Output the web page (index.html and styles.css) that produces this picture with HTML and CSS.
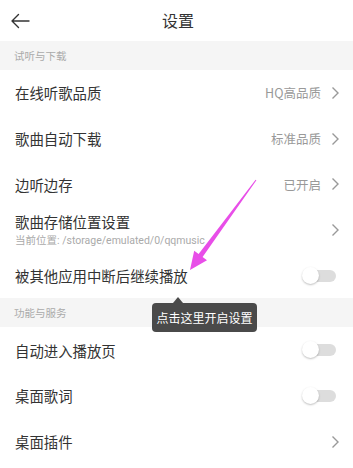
FILE: index.html
```html
<!DOCTYPE html>
<html lang="zh-CN">
<head>
<meta charset="utf-8">
<title>设置</title>
<link rel="stylesheet" href="styles.css">
</head>
<body>
<div class="page">
  <header class="topbar">
    <svg class="back" width="20" height="16" viewBox="0 0 20 16"><path d="M19 8H2M8.5 1.5L2 8l6.5 6.5" fill="none" stroke="#333" stroke-width="1.4" stroke-linecap="round" stroke-linejoin="round"/></svg>
    <h1 class="title">设置</h1>
  </header>

  <div class="section">试听与下载</div>
  <div class="row">
    <span class="label">在线听歌品质</span>
    <span class="value">HQ高品质</span>
    <svg class="chev" width="9" height="14" viewBox="0 0 9 14"><path d="M1.5 1.5L7 7l-5.5 5.5" fill="none" stroke="#999" stroke-width="1.4"/></svg>
  </div>
  <div class="row">
    <span class="label">歌曲自动下载</span>
    <span class="value">标准品质</span>
    <svg class="chev" width="9" height="14" viewBox="0 0 9 14"><path d="M1.5 1.5L7 7l-5.5 5.5" fill="none" stroke="#999" stroke-width="1.4"/></svg>
  </div>
  <div class="row">
    <span class="label">边听边存</span>
    <span class="value">已开启</span>
    <svg class="chev" width="9" height="14" viewBox="0 0 9 14"><path d="M1.5 1.5L7 7l-5.5 5.5" fill="none" stroke="#999" stroke-width="1.4"/></svg>
  </div>
  <div class="row">
    <div class="stack">
      <span class="label">歌曲存储位置设置</span>
      <span class="sub">当前位置: /storage/emulated/0/qqmusic</span>
    </div>
    <svg class="chev" width="9" height="14" viewBox="0 0 9 14"><path d="M1.5 1.5L7 7l-5.5 5.5" fill="none" stroke="#999" stroke-width="1.4"/></svg>
  </div>
  <div class="row">
    <span class="label">被其他应用中断后继续播放</span>
    <span class="toggle"><span class="knob"></span></span>
  </div>

  <div class="section">功能与服务</div>
  <div class="row">
    <span class="label">自动进入播放页</span>
    <span class="toggle"><span class="knob"></span></span>
  </div>
  <div class="row">
    <span class="label">桌面歌词</span>
    <span class="toggle"><span class="knob"></span></span>
  </div>
  <div class="row">
    <span class="label">桌面插件</span>
    <svg class="chev" width="9" height="14" viewBox="0 0 9 14"><path d="M1.5 1.5L7 7l-5.5 5.5" fill="none" stroke="#999" stroke-width="1.4"/></svg>
  </div>

  <div class="tooltip">点击这里开启设置</div>

  <svg class="pointer" width="353" height="468" viewBox="0 0 353 468">
    <polygon points="256.4,180.3 255.6,179.7 198.6,254 194.2,250.8 190,270 207,260.2 202.6,257" fill="#e84ee8"/>
  </svg>
</div>
</body>
</html>
```

FILE: styles.css
```css
* { box-sizing: border-box; margin: 0; padding: 0; }
html, body { background: #fff; }
body {
  font-family: "Noto Sans CJK SC", "Noto Sans", sans-serif;
  color: #333;
  width: 353px;
  height: 468px;
  overflow: hidden;
}
.page { position: relative; width: 353px; height: 468px; }
.topbar {
  height: 41px;
  display: flex;
  align-items: center;
  position: relative;
}
.back { position: absolute; left: 10px; top: 13px; }
.title {
  flex: 1;
  text-align: center;
  font-size: 16px;
  font-weight: normal;
  color: #333;
  padding-left: 3px;
  line-height: 41px;
}
.section {
  background: #f5f5f5;
  height: 29px;
  display: flex;
  align-items: center;
  padding-left: 14px;
  font-size: 10.5px;
  color: #aaa;
}
.row {
  height: 45.7px;
  display: flex;
  align-items: center;
  padding: 0 12px 0 15px;
}
.row:first-of-type { }
.label { font-size: 14.4px; color: #333; flex: 1; white-space: nowrap; }
.stack { flex: 1; display: flex; flex-direction: column; padding-top: 1px; }
.stack .label { line-height: 20px; }
.sub {
  font-family: Roboto, "Noto Sans CJK SC", sans-serif;
  font-size: 10.5px;
  color: #aaa;
  line-height: 17px;
  white-space: nowrap;
}
.value { font-size: 12.5px; color: #999; margin-right: 10px; }
.chev { flex: none; margin-right: 1px; }
.toggle {
  position: relative;
  width: 32px;
  height: 12px;
  border-radius: 6px;
  background: #ddd;
  margin-right: 5px;
}
.knob {
  position: absolute;
  left: -2px;
  top: -3px;
  width: 17px;
  height: 17px;
  border-radius: 50%;
  background: #fff;
  box-shadow: 0 1px 2px rgba(0,0,0,0.25);
}
.tooltip {
  position: absolute;
  left: 152px;
  top: 303px;
  width: 105px;
  height: 29px;
  background: #4a4a4a;
  border-radius: 4px;
  color: #fff;
  font-size: 12px;
  display: flex;
  align-items: center;
  justify-content: center;
}
.tooltip::before {
  content: "";
  position: absolute;
  left: 21px;
  top: -6px;
  border-left: 5px solid transparent;
  border-right: 5px solid transparent;
  border-bottom: 6px solid #4a4a4a;
}
.pointer { position: absolute; left: 0; top: 0; pointer-events: none; }
```
